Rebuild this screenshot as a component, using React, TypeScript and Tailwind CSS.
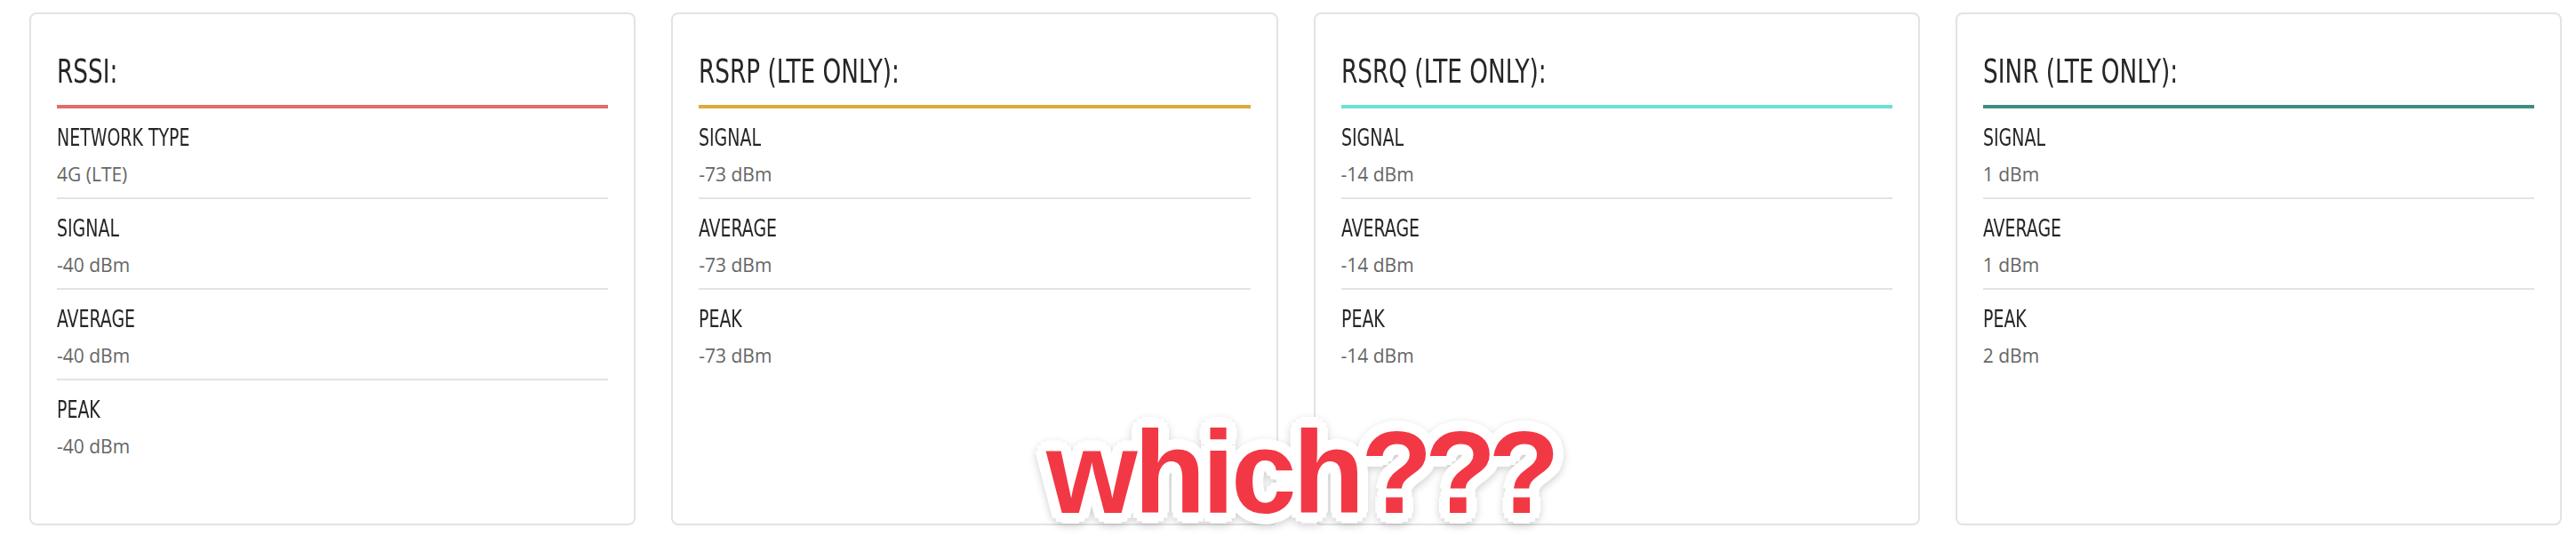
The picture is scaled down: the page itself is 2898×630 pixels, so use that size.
type Row = { label: string; value: string };

type Card = {
  title: string;
  accent: string;
  rows: Row[];
};

const cards: Card[] = [
  {
    title: 'RSSI:',
    accent: 'bg-[#e56a6a]',
    rows: [
      { label: 'NETWORK TYPE', value: '4G (LTE)' },
      { label: 'SIGNAL', value: '-40 dBm' },
      { label: 'AVERAGE', value: '-40 dBm' },
      { label: 'PEAK', value: '-40 dBm' },
    ],
  },
  {
    title: 'RSRP (LTE ONLY):',
    accent: 'bg-[#dcaa3c]',
    rows: [
      { label: 'SIGNAL', value: '-73 dBm' },
      { label: 'AVERAGE', value: '-73 dBm' },
      { label: 'PEAK', value: '-73 dBm' },
    ],
  },
  {
    title: 'RSRQ (LTE ONLY):',
    accent: 'bg-[#6ce0d6]',
    rows: [
      { label: 'SIGNAL', value: '-14 dBm' },
      { label: 'AVERAGE', value: '-14 dBm' },
      { label: 'PEAK', value: '-14 dBm' },
    ],
  },
  {
    title: 'SINR (LTE ONLY):',
    accent: 'bg-[#3e8c80]',
    rows: [
      { label: 'SIGNAL', value: '1 dBm' },
      { label: 'AVERAGE', value: '1 dBm' },
      { label: 'PEAK', value: '2 dBm' },
    ],
  },
];

// condensed heading face (Oswald-like): DejaVu Condensed squeezed a bit
const headFont = "font-['Liberation_Sans_Narrow','DejaVu_Sans_Condensed',sans-serif]";

function SignalCard({ card }: { card: Card }) {
  return (
    <div className="h-[577px] rounded-lg border-2 border-[#e3e3e3] bg-white px-[29px] pt-[44px]">
      {/* Card heading + coloured rule */}
      <h2 className={`h-10 ${headFont} text-[38px] leading-10 font-normal text-[#262626]`}>
        <span className="inline-block origin-left scale-x-[0.77] whitespace-nowrap">{card.title}</span>
      </h2>
      <div className={`mt-[18px] h-1 ${card.accent}`} />

      {/* Readings */}
      {card.rows.map((row) => (
        <div
          key={row.label}
          className="border-b-2 border-[#e3e3e3] pt-[19px] pb-3 last:border-b-0"
        >
          <div className={`h-7 ${headFont} text-[27px] leading-7 text-[#262626]`}>
            <span className="inline-block origin-left scale-x-[0.78] whitespace-nowrap">{row.label}</span>
          </div>
          <div className="mt-[13px] h-7 font-['Open_Sans','Noto_Sans',sans-serif] text-[21px] leading-7 text-[#666]">
            {row.value}
          </div>
        </div>
      ))}
    </div>
  );
}

export default function App() {
  return (
    <div className="relative h-[630px] w-full overflow-hidden bg-white">
      <div className="grid grid-cols-4 gap-x-10 pt-[14px] pr-[16px] pl-[33px]">
        {cards.map((card) => (
          <SignalCard key={card.title} card={card} />
        ))}
      </div>

      {/* Sticker-style annotation over the cards */}
      <div className="absolute top-[466px] left-[1177px] drop-shadow-[0_3px_4px_rgba(0,0,0,0.18)]">
        <span className="block font-['Liberation_Sans','Arial',sans-serif] text-[132px] leading-none font-bold tracking-[-4px] whitespace-nowrap text-[#f23845] [text-shadow:12px_0_0_#fff,10.4px_6px_0_#fff,6px_10.4px_0_#fff,0_12px_0_#fff,-6px_10.4px_0_#fff,-10.4px_6px_0_#fff,-12px_0_0_#fff,-10.4px_-6px_0_#fff,-6px_-10.4px_0_#fff,0_-12px_0_#fff,6px_-10.4px_0_#fff,10.4px_-6px_0_#fff,6px_0_0_#fff,0_6px_0_#fff,-6px_0_0_#fff,0_-6px_0_#fff,4px_4px_0_#fff,-4px_4px_0_#fff,-4px_-4px_0_#fff,4px_-4px_0_#fff]">
          which<span className="tracking-[-9px]">???</span>
        </span>
      </div>
    </div>
  );
}
